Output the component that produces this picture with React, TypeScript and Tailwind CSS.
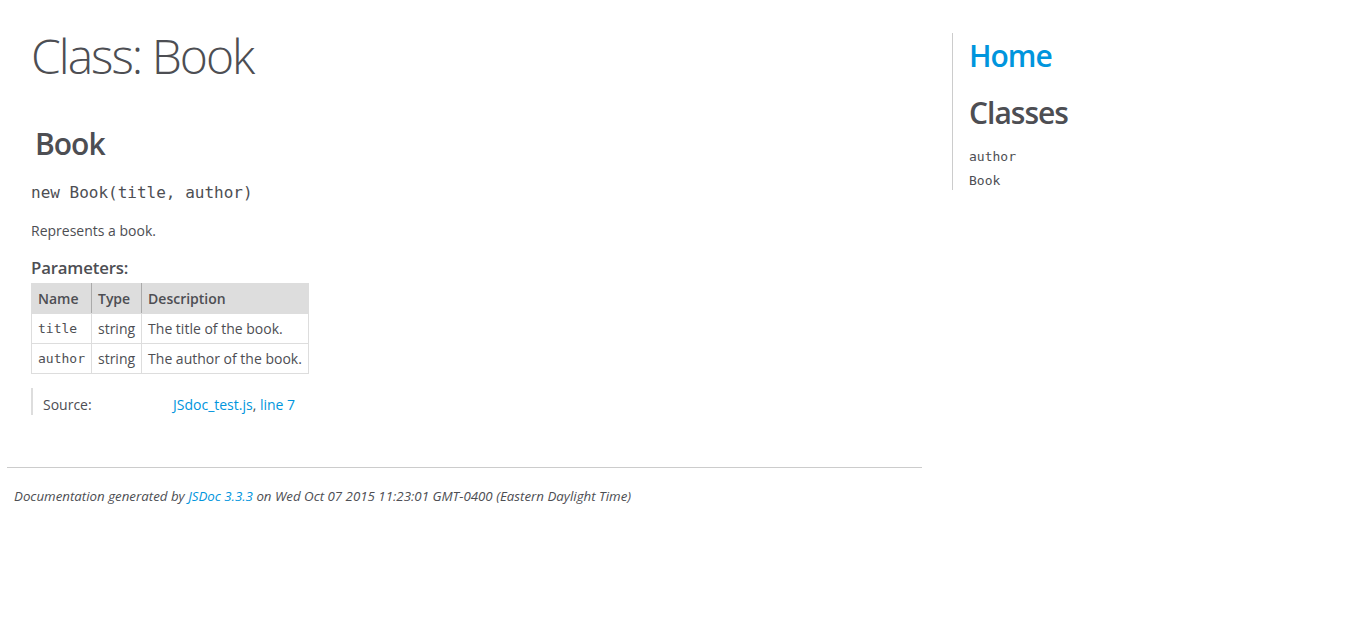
import React from "react";

const sans = { fontFamily: '"Open Sans", sans-serif' };

export default function App() {
  return (
    <div
      className="bg-white text-[#4d4e53] text-[14px] leading-[1.5] pl-[7px] pr-[8px] py-[8px] min-h-[623px] font-['Open_Sans',sans-serif]"
    >
      <div className="flex items-start">
        <div className="w-[945px] shrink-0">
          <h1 className="mx-[24px] mt-[12px] mb-[20px] text-[48px] leading-[72px] tracking-[-2px] font-light">
            Class: Book
          </h1>
          <section className="px-[24px] py-[12px] border-b border-[#ccc] mr-[30px]">
            <header className="px-[4px]">
              <h2 className="text-[30px] font-semibold tracking-[-1px] leading-[45px] -mt-[3px] mb-[15px]">Book</h2>
            </header>
            <div>
              <h4 className="font-['DejaVu_Sans_Mono',monospace] text-[16px] leading-[24px] mb-[15px]">
                new Book(title, author)
              </h4>
              <div className="mb-[14px]">Represents a book.</div>
              <h5 className="text-[16.8px] font-semibold tracking-[-0.01em] mt-[8px] mb-[3px]">Parameters:</h5>
              <table className="border-collapse">
                <thead>
                  <tr className="bg-[#ddd]">
                    <th className="border border-[#ddd] border-r-[#aaa] px-[6px] py-[4px] text-left font-semibold">Name</th>
                    <th className="border border-[#ddd] border-r-[#aaa] px-[6px] py-[4px] text-left font-semibold">Type</th>
                    <th className="border border-[#ddd] px-[6px] py-[4px] text-left font-semibold">Description</th>
                  </tr>
                </thead>
                <tbody>
                  <tr>
                    <td className="border border-[#ddd] px-[6px] py-[4px] font-['DejaVu_Sans_Mono',monospace] text-[13px] leading-[21px]">title</td>
                    <td className="border border-[#ddd] px-[6px] py-[4px]">string</td>
                    <td className="border border-[#ddd] px-[6px] py-[4px]">The title of the book.</td>
                  </tr>
                  <tr>
                    <td className="border border-[#ddd] px-[6px] py-[4px] font-['DejaVu_Sans_Mono',monospace] text-[13px] leading-[21px]">author</td>
                    <td className="border border-[#ddd] px-[6px] py-[4px]">string</td>
                    <td className="border border-[#ddd] px-[6px] py-[4px]">The author of the book.</td>
                  </tr>
                </tbody>
              </table>
              <div className="mt-[14px] mb-[40px] border-l-2 border-[#ddd] flex">
                <div className="w-[130px] pl-[10px] pt-[6px]">Source:</div>
                <div className="pt-[6px] pl-[10px]">
                  <a className="text-[#0095dd]">JSdoc_test.js</a>, <a className="text-[#0095dd]">line 7</a>
                </div>
              </div>
            </div>
          </section>
          <footer className="p-[6px] pl-[7px] mt-[12px] italic text-[13.3px] leading-[20px]">
            Documentation generated by <a className="text-[#0095dd]">JSDoc 3.3.3</a> on Wed Oct 07 2015 11:23:01 GMT-0400 (Eastern Daylight Time)
          </footer>
        </div>
        <nav className="flex-1 mt-[25px] border-l border-[#ccc] pl-[16px]" style={sans}>
          <h2 className="text-[30px] font-semibold tracking-[-1px] leading-[45px] mb-[12px]">
            <a className="text-[#0095dd]">Home</a>
          </h2>
          <h3 className="text-[30px] font-semibold tracking-[-1px] leading-[45px] mb-[13px]">Classes</h3>
          <ul className="font-['DejaVu_Sans_Mono',monospace] text-[13px]">
            <li className="mt-[6px] leading-[18px]">author</li>
            <li className="mt-[6px] leading-[18px]">Book</li>
          </ul>
        </nav>
      </div>
    </div>
  );
}
